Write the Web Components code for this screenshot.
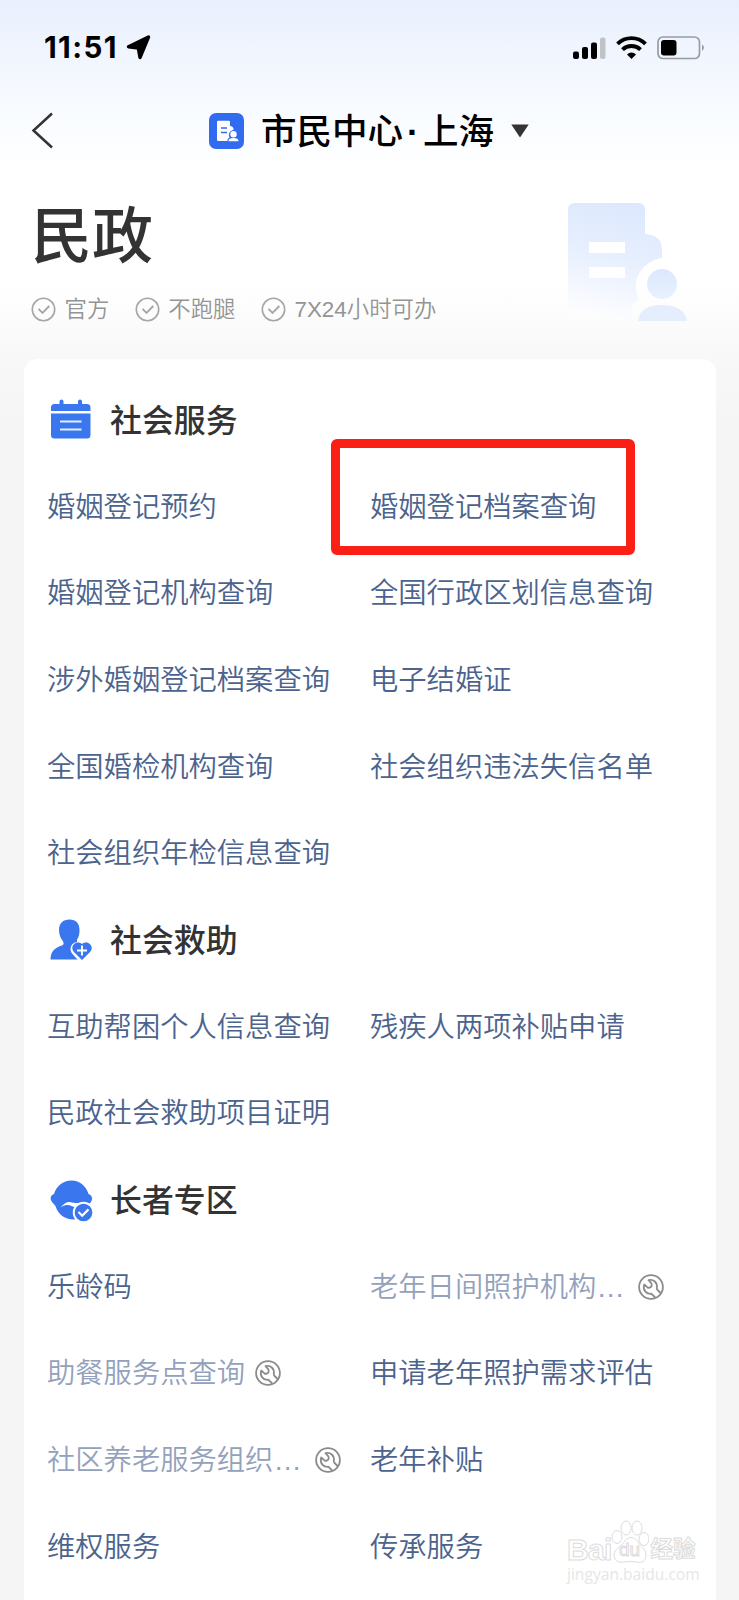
<!DOCTYPE html>
<html lang="zh-CN">
<head>
<meta charset="utf-8">
<title>市民中心·上海</title>
<style>
  body {
    margin: 0;
    font-family: "Liberation Sans", "Noto Sans CJK SC", sans-serif;
    color: #333;
  }
</style>
</head>
<body>
<civic-page>
  <status-bar slot="top" time="11:51"></status-bar>
  <nav-header slot="top" city="上海">市民中心</nav-header>
  <page-hero slot="top" heading="民政">
    <hero-tag>官方</hero-tag>
    <hero-tag>不跑腿</hero-tag>
    <hero-tag>7X24小时可办</hero-tag>
  </page-hero>
  <service-section icon="calendar" heading="社会服务">
    <service-link>婚姻登记预约</service-link>
    <service-link marked>婚姻登记档案查询</service-link>
    <service-link>婚姻登记机构查询</service-link>
    <service-link>全国行政区划信息查询</service-link>
    <service-link>涉外婚姻登记档案查询</service-link>
    <service-link>电子结婚证</service-link>
    <service-link>全国婚检机构查询</service-link>
    <service-link>社会组织违法失信名单</service-link>
    <service-link>社会组织年检信息查询</service-link>
  </service-section>
  <service-section icon="person" heading="社会救助">
    <service-link>互助帮困个人信息查询</service-link>
    <service-link>残疾人两项补贴申请</service-link>
    <service-link>民政社会救助项目证明</service-link>
  </service-section>
  <service-section icon="elder" heading="长者专区">
    <service-link>乐龄码</service-link>
    <service-link repair wide>老年日间照护机构…</service-link>
    <service-link repair>助餐服务点查询</service-link>
    <service-link>申请老年照护需求评估</service-link>
    <service-link repair wide>社区养老服务组织…</service-link>
    <service-link>老年补贴</service-link>
    <service-link>维权服务</service-link>
    <service-link>传承服务</service-link>
  </service-section>
  <water-mark slot="overlay"></water-mark>
</civic-page>

<script>
const ICONS = {
  calendar: `
    <svg width="42" height="42" viewBox="0 0 42 42">
      <path fill="#3a76ee" d="M1 12V8.500a3.500 3.500 0 0 1 3.500-3.500H9.500V2.500a2 2 0 0 1 4 0V5H28V2.500a2 2 0 0 1 4 0V5h5a3.500 3.500 0 0 1 3.500 3.500V12z"/>
      <path fill="#3a76ee" d="M1 14.500h39.500V36a3.500 3.500 0 0 1-3.500 3.500H4.500A3.500 3.500 0 0 1 1 36z"/>
      <path stroke="#e4edff" stroke-width="2.200" d="M10 22.500h21.500M10 30.500h21.500"/>
    </svg>`,
  person: `
    <svg width="43" height="42" viewBox="0 0 43 42">
      <path fill="#3a76ee" d="M9 11C9 4.500 13 .5 19.500 .5c6.500 0 10 4 10 10.500 0 4-.5 7-2.500 9.500v2.500c-6 .5-8.500 7.500-4.500 12l5 5.500H.5C.5 32.500 5 28.500 12 26.500c2-.8 2-3 .5-5C10.500 19 9 15.500 9 11z"/>
      <path fill="#3a76ee" d="M32 41l-8.500-8.500c-4-5.500 2.700-12 8.500-7.500 5.800-4.500 12.500 2 8.500 7.500z"/>
      <path stroke="#fff" stroke-width="1.900" d="M27 31.500h10M32 26.500v10"/>
    </svg>`,
  elder: `
    <svg width="43" height="43" viewBox="0 0 43 43">
      <path fill="#3a76ee" d="M4 14C6.500 6 13 .5 21.500 .5S36 6 38.500 14c3.500 1.500 4.500 4 2.500 8L37 26c-1 8-6 13.500-13 13.500C14 39.500 8 34 5.500 26L2 22C-.5 18.500.5 15.500 4 14z"/>
      <path fill="#fff" d="M10.500 27.500c3-3.500 5.500-5.500 9-5.500 2.200 0 3.500 1.200 6 1 2.500-.2 4 .2 5 1l-6.500 3c-2.500-1.200-4-1.500-6-2-2.500-.5-5 .8-7.500 2.500z"/>
      <circle cx="33.500" cy="32.500" r="9.800" fill="#3a76ee" stroke="#fff" stroke-width="1.900"/>
      <path fill="none" stroke="#fff" stroke-width="2.200" d="M28.500 32l3.700 3.700 6.300-6.300"/>
    </svg>`,
  check: `
    <svg width="25" height="25" viewBox="0 0 25 25" fill="none" stroke="#a6a6a6">
      <circle cx="12.500" cy="12.500" r="11.200" stroke-width="1.600"/>
      <path stroke-width="1.900" d="M7.500 11.800l4 4 6.800-6.800"/>
    </svg>`,
  repair: `
    <svg width="26" height="26" viewBox="0 0 26 26" fill="none" stroke="#8b8b8b" stroke-width="1.800" stroke-linejoin="round">
      <circle cx="13" cy="13" r="11.900"/>
      <path d="M17.200 23.500l-3.900-3.800c-5 .8-8.900-4-7.100-9.200l3.300 2.900c1.200.8 3.300.1 4-1.100.6-1.200.4-2.500-.5-3.500l-2.500-2.700c4.900-1.400 9.200 2.600 8.300 7.700-.1.900.2 1.600.8 2.200l3.500 3.500"/>
    </svg>`,
};

class CivicPage extends HTMLElement {
  constructor() {
    super();
    this.attachShadow({ mode: "open" }).innerHTML = `
      <style>
        :host {
          display: flex;
          flex-direction: column;
          position: relative;
          height: 1600px;
          overflow: hidden;
          background: linear-gradient(#e9f0fd 0, #f0f5fe 50px, #f8fbff 110px, #fff 172px, #fff 285px, #fafafa 335px, #f7f7f7 375px, #f5f5f5 430px);
        }
        main {
          flex: 1;
          margin: 0 23.500px;
          padding: 18px 0 0 23.500px;
          border-radius: 14px 14px 0 0;
          background: #fff;
        }
      </style>
      <slot name="top"></slot>
      <main><slot></slot></main>
      <slot name="overlay"></slot>
    `;
  }
}

class StatusBar extends HTMLElement {
  connectedCallback() {
    this.attachShadow({ mode: "open" }).innerHTML = `
      <style>
        :host {
          display: flex;
          align-items: center;
          height: 94px;
          padding: 0 33px 0 44px;
          box-sizing: border-box;
          color: #000;
        }
        time {
          width: 82px;
          font: 700 29.500px/34px Inter, sans-serif;
          letter-spacing: 1.400px;
          white-space: nowrap;
        }
        .signals {
          margin: 0 0 1px auto;
        }
        svg {
          display: block;
        }
      </style>
      <time>${this.getAttribute("time")}</time>
      <svg width="26" height="26" viewBox="0 0 26 26">
        <path d="M22.500 3L14 23.500 12.300 14 2.500 12.800z" stroke="#000" stroke-width="3.400" stroke-linejoin="round"/>
      </svg>
      <svg class="signals" width="134" height="26" viewBox="0 0 134 26">
        <rect x="1" y="17.500" width="6" height="7.500" rx="2"/>
        <rect x="10" y="13" width="6" height="12" rx="2"/>
        <rect x="19" y="8.500" width="6" height="16.500" rx="2"/>
        <rect x="28" y="3.500" width="5.500" height="21.500" rx="2" fill="#bfc3c8"/>
        <g fill="none" stroke="#000" stroke-width="3.900">
          <path d="M45.500 9.800a20 20 0 0 1 28 0"/>
          <path d="M50.500 15.600a13 13 0 0 1 18 0"/>
        </g>
        <path d="M55 20.400a6.500 6.500 0 0 1 9 0L59.500 25z"/>
        <rect x="86" y="3" width="41.500" height="21.500" rx="5" fill="none" stroke="#989ca3" stroke-width="1.700"/>
        <rect x="89" y="6" width="15.500" height="15.500" rx="3"/>
        <path fill="#989ca3" d="M130 10.500q4 3.200 0 6.500z"/>
      </svg>
    `;
  }
}

class NavHeader extends HTMLElement {
  connectedCallback() {
    this.attachShadow({ mode: "open" }).innerHTML = `
      <style>
        :host {
          display: flex;
          align-items: center;
          height: 73px;
          padding-left: 31px;
          color: #000;
        }
        .logo {
          margin: 0 17px 0 156px;
        }
        h1 {
          display: flex;
          margin: 0;
          padding-top: 2px;
          font-size: 35.500px;
          font-weight: 500;
          line-height: 50px;
        }
        i {
          width: 20px;
          text-align: center;
          font-style: normal;
          font-weight: 700;
        }
        .caret {
          margin-left: 17px;
        }
      </style>
      <svg width="22" height="37" viewBox="0 0 22 37">
        <path fill="none" stroke="#333" stroke-width="2.500" d="M21 1.500L2.500 18.500 21 35.500"/>
      </svg>
      <svg class="logo" width="35" height="36" viewBox="0 0 35 36">
        <rect width="35" height="36" rx="7" fill="#316bf0"/>
        <path fill="#fff" d="M8 9q0-1.200 1.200-1.200h10.500q1.300 0 1.300 1.200v4q3.500 0 3.500 3.500v.5c-4 .5-5.500 4.500-4 7.500-1.500 1-2 2-2 3.500H9.200Q8 28 8 26.800z"/>
        <path stroke="#316bf0" stroke-width="1.600" d="M12 15h6M12 19.500h6"/>
        <circle cx="24.500" cy="21.300" r="3.200" fill="#fff"/>
        <path fill="#fff" d="M19.500 28.200q0-3.200 5-3.200t5 3.200z"/>
      </svg>
      <h1><slot></slot><i>·</i><span>${this.getAttribute("city")}</span></h1>
      <svg class="caret" width="18" height="14" viewBox="0 0 18 14">
        <path fill="#333" d="M.3.500h17.400L9 13.500z"/>
      </svg>
    `;
  }
}

class PageHero extends HTMLElement {
  connectedCallback() {
    this.attachShadow({ mode: "open" }).innerHTML = `
      <style>
        :host {
          display: flex;
          justify-content: space-between;
          height: 192px;
          padding: 0 50px 0 31px;
        }
        h2 {
          margin: 27px 0 16px 0;
          font-size: 61px;
          line-height: 86px;
          font-weight: 500;
        }
        .tags {
          display: flex;
          gap: 25.500px;
        }
        svg {
          margin-top: 34px;
        }
      </style>
      <div>
        <h2>${this.getAttribute("heading")}</h2>
        <div class="tags"><slot></slot></div>
      </div>
      <svg width="122" height="124" viewBox="0 0 122 124">
        <defs>
          <linearGradient id="fade" x1="0.600" y1="0" x2="0.400" y2="1">
            <stop offset="0" stop-color="#dce8fd"/>
            <stop offset=".45" stop-color="#e6effe"/>
            <stop offset="1" stop-color="#fdfdfe"/>
          </linearGradient>
          <linearGradient id="figure" x1="0" y1="0" x2="0" y2="1">
            <stop offset="0" stop-color="#dbe8fd"/>
            <stop offset="1" stop-color="#e8f1fe"/>
          </linearGradient>
        </defs>
        <path fill="url(#fade)" d="M1 9q0-7 7-7h63q7 0 7 7v24q17 1 17 16v8c-20 3-32 23-23 41-6 4-9 9-10 20H1z"/>
        <path fill="#fff" d="M22 41h36v11H22zM22 66h36v11H22z"/>
        <circle cx="95" cy="83" r="15" fill="url(#figure)"/>
        <path fill="#e4eefd" d="M71 120q2-16 24-16t25 16z"/>
      </svg>
    `;
  }
}

class HeroTag extends HTMLElement {
  constructor() {
    super();
    this.attachShadow({ mode: "open" }).innerHTML = `
      <style>
        :host {
          display: flex;
          align-items: center;
          gap: 8.500px;
          height: 26px;
          font-size: 22.400px;
          font-weight: 350;
          line-height: 26px;
          color: #949494;
          white-space: nowrap;
        }
        svg {
          display: block;
        }
        span {
          padding-top: 1px;
        }
      </style>
      ${ICONS.check}<span><slot></slot></span>
    `;
  }
}

class ServiceSection extends HTMLElement {
  connectedCallback() {
    this.attachShadow({ mode: "open" }).innerHTML = `
      <style>
        :host {
          display: block;
        }
        header {
          display: flex;
          align-items: center;
          gap: 17px;
          height: 86.700px;
          padding-left: 3px;
        }
        .icon {
          width: 43px;
          height: 42px;
        }
        h3 {
          margin: 0;
          padding-top: 1px;
          font-size: 31.900px;
          font-weight: 500;
          line-height: 44px;
        }
        .links {
          display: grid;
          grid-template-columns: 323px 1fr;
          grid-auto-rows: 86.700px;
        }
      </style>
      <header>
        <div class="icon">${ICONS[this.getAttribute("icon")]}</div>
        <h3>${this.getAttribute("heading")}</h3>
      </header>
      <div class="links"><slot></slot></div>
    `;
  }
}

class ServiceLink extends HTMLElement {
  connectedCallback() {
    this.attachShadow({ mode: "open" }).innerHTML = `
      <style>
        :host {
          display: flex;
          align-items: center;
          gap: 10px;
          position: relative;
          padding-bottom: 1px;
          font-size: 28.300px;
          font-weight: 350;
          line-height: 40px;
          color: #4b638d;
          white-space: nowrap;
        }
        :host([repair]) {
          color: #93a1bc;
        }
        :host([wide]) {
          gap: 13px;
        }
        svg {
          display: block;
        }
        .frame {
          position: absolute;
          left: -39px;
          top: -25px;
          width: 304px;
          height: 116px;
          box-sizing: border-box;
          border: 9px solid #fb2015;
          border-radius: 6px;
        }
      </style>
      <span><slot></slot></span>
      ${this.hasAttribute("repair") ? ICONS.repair : ""}
      ${this.hasAttribute("marked") ? '<div class="frame"></div>' : ""}
    `;
  }
}

class WaterMark extends HTMLElement {
  constructor() {
    super();
    this.attachShadow({ mode: "open" }).innerHTML = `
      <style>
        :host {
          position: absolute;
          left: 567px;
          top: 1519px;
          width: 134px;
          color: #fff;
          -webkit-text-stroke: 1px #dcdcdc;
        }
        .brand {
          display: flex;
          align-items: center;
          height: 46px;
        }
        b {
          padding-top: 15px;
          font-size: 30px;
          line-height: 28px;
          letter-spacing: -0.7px;
        }
        .paw {
          display: grid;
          margin: 0 2px 0 -1px;
        }
        .paw > * {
          grid-area: 1 / 1;
        }
        .paw span {
          padding-top: 21px;
          text-align: center;
          font-size: 19px;
          line-height: 20px;
        }
        .cn {
          font-size: 22.500px;
          letter-spacing: 0;
        }
        p {
          margin: -1px 0 0;
          font: 15.600px/20px "Open Sans", sans-serif;
          color: #e6e6e6;
          -webkit-text-stroke: 0;
          white-space: nowrap;
        }
      </style>
      <div class="brand">
        <b>Bai</b>
        <div class="paw">
          <svg width="38" height="46" viewBox="0 0 38 46" fill="#fff" stroke="#dcdcdc">
            <ellipse cx="6" cy="18" rx="5" ry="6.500"/>
            <ellipse cx="15" cy="9" rx="5" ry="7"/>
            <ellipse cx="26" cy="9" rx="5" ry="7"/>
            <ellipse cx="33" cy="20" rx="5" ry="6.500"/>
            <path d="M13 23c4-6 10-6 14 0 2 4 8 7 8 13 0 7-5 8-9 7q-7-1-14 0c-5 1-9-2-9-7 0-6 8-9 10-13z"/>
          </svg>
          <span>du</span>
        </div>
        <b class="cn">经验</b>
      </div>
      <p>jingyan.baidu.com</p>
    `;
  }
}

customElements.define("civic-page", CivicPage);
customElements.define("status-bar", StatusBar);
customElements.define("nav-header", NavHeader);
customElements.define("page-hero", PageHero);
customElements.define("hero-tag", HeroTag);
customElements.define("service-section", ServiceSection);
customElements.define("service-link", ServiceLink);
customElements.define("water-mark", WaterMark);
</script>
</body>
</html>
